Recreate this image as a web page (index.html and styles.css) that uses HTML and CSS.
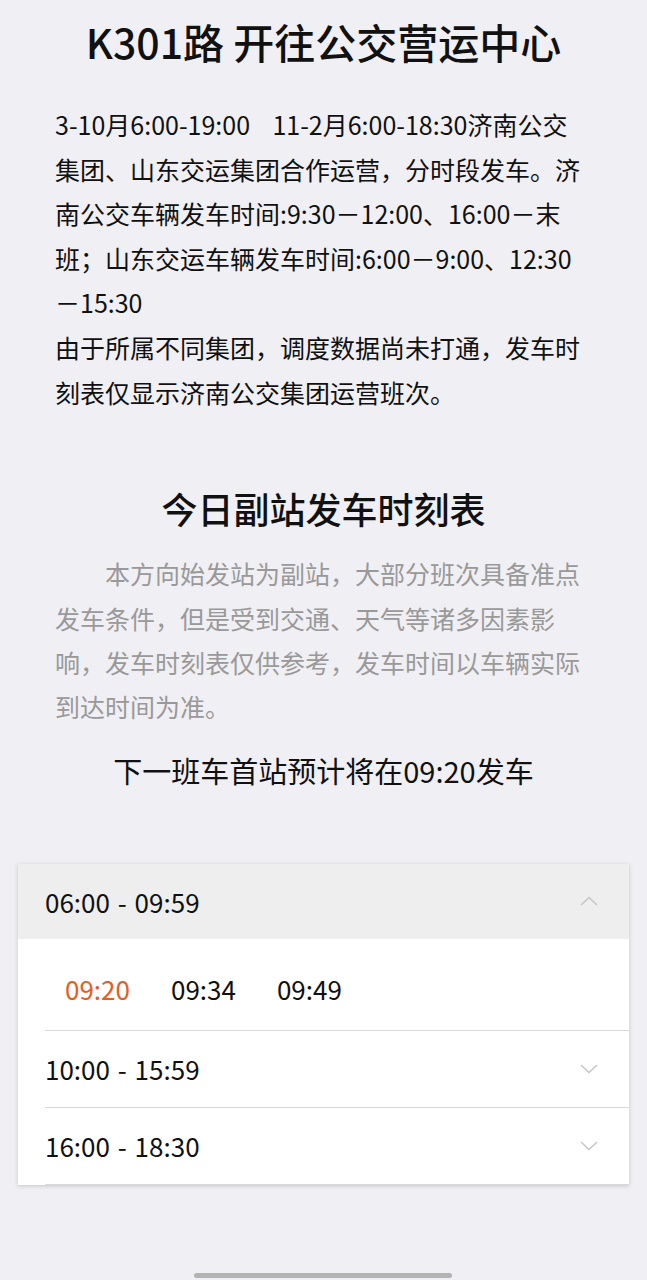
FILE: index.html
```html
<!DOCTYPE html>
<html lang="zh-CN">
<head>
  <meta charset="UTF-8" />
  <title>K301路 发车时刻表</title>
  <meta name="viewport" content="width=device-width, initial-scale=1.0" />
  <link rel="stylesheet" href="styles.css">
</head>
<body>
  <div class="page">
    <h1 class="line-title">K301路 开往公交营运中心</h1>

    <div class="notice">
      3-10月6:00-19:00&nbsp;&nbsp;&nbsp;&nbsp;11-2月6:00-18:30济南公交集团、山东交运集团合作运营，分时段发车。济南公交车辆发车时间:9:30－12:00、16:00－末班；山东交运车辆发车时间:6:00－9:00、12:30－15:30<br>由于所属不同集团，调度数据尚未打通，发车时刻表仅显示济南公交集团运营班次。
    </div>

    <h2 class="section-title">今日副站发车时刻表</h2>
    <p class="tip">本方向始发站为副站，大部分班次具备准点发车条件，但是受到交通、天气等诸多因素影响，发车时刻表仅供参考，发车时间以车辆实际到达时间为准。</p>
    <p class="next-bus">下一班车首站预计将在09:20发车</p>

    <div class="schedule">
      <div class="period open">
        <div class="period-head">
          <span>06:00 - 09:59</span>
          <svg class="arrow" width="18" height="10" viewBox="0 0 18 10"><path d="M1 9 L9 1.5 L17 9" /></svg>
        </div>
        <div class="times">
          <span class="time next">09:20</span>
          <span class="time">09:34</span>
          <span class="time">09:49</span>
        </div>
      </div>
      <div class="period">
        <div class="period-head">
          <span>10:00 - 15:59</span>
          <svg class="arrow" width="18" height="10" viewBox="0 0 18 10"><path d="M1 1 L9 8.5 L17 1" /></svg>
        </div>
      </div>
      <div class="period">
        <div class="period-head">
          <span>16:00 - 18:30</span>
          <svg class="arrow" width="18" height="10" viewBox="0 0 18 10"><path d="M1 1 L9 8.5 L17 1" /></svg>
        </div>
      </div>
    </div>
  </div>

  <div class="home-bar"></div>
</body>
</html>
```

FILE: styles.css
```css
:root {
  --bg: #f0eff4;
  --text: #111;
  --grey: #999;
  --orange: #e45d25;
  --line: #d9d9d9;
}

body {
  font-family: "Noto Sans CJK SC", "Noto Sans", sans-serif;
  background-color: var(--bg);
  color: var(--text);
  margin: 0;
}

.page {
  padding: 13px 0 80px;
}

.line-title {
  margin: 0;
  text-align: center;
  font-size: 41px;
  font-weight: 500;
  line-height: 56px;
}

.notice {
  margin: 33px 55px 0;
  font-size: 25px;
  line-height: 44.6px;
}

.section-title {
  margin: 69px 0 0;
  text-align: center;
  font-size: 36px;
  font-weight: 500;
  line-height: 50px;
}

.tip {
  margin: 18px 55px 0;
  font-size: 25px;
  line-height: 44.4px;
  text-indent: 2em;
  color: var(--grey);
}

.next-bus {
  margin: 21px 0 0;
  text-align: center;
  font-size: 29px;
  line-height: 40px;
}

.schedule {
  margin: 74px 18px 0;
  background: white;
  box-shadow: 0 1px 4px rgba(0, 0, 0, 0.18);
}

.period-head {
  display: flex;
  align-items: center;
  justify-content: space-between;
  height: 76px;
  margin-left: 27px;
  padding-right: 31px;
  font-size: 26px;
  word-spacing: 2px;
  border-bottom: 1px solid var(--line);
}

.open .period-head {
  margin-left: 0;
  padding-left: 27px;
  height: 75px;
  background: #eeeeee;
  border-bottom: none;
}

.arrow {
  fill: none;
  stroke: #c4c4c4;
  stroke-width: 1.4;
}

.times {
  display: flex;
  align-items: center;
  gap: 41px;
  height: 82px;
  padding: 9px 0 0 20px;
  margin-left: 27px;
  border-bottom: 1px solid var(--line);
  font-size: 26px;
}

.time.next {
  color: var(--orange);
}

.home-bar {
  position: fixed;
  left: 194px;
  bottom: 2px;
  width: 258px;
  height: 5px;
  border-radius: 3px;
  background: #b3b3b3;
}
```
